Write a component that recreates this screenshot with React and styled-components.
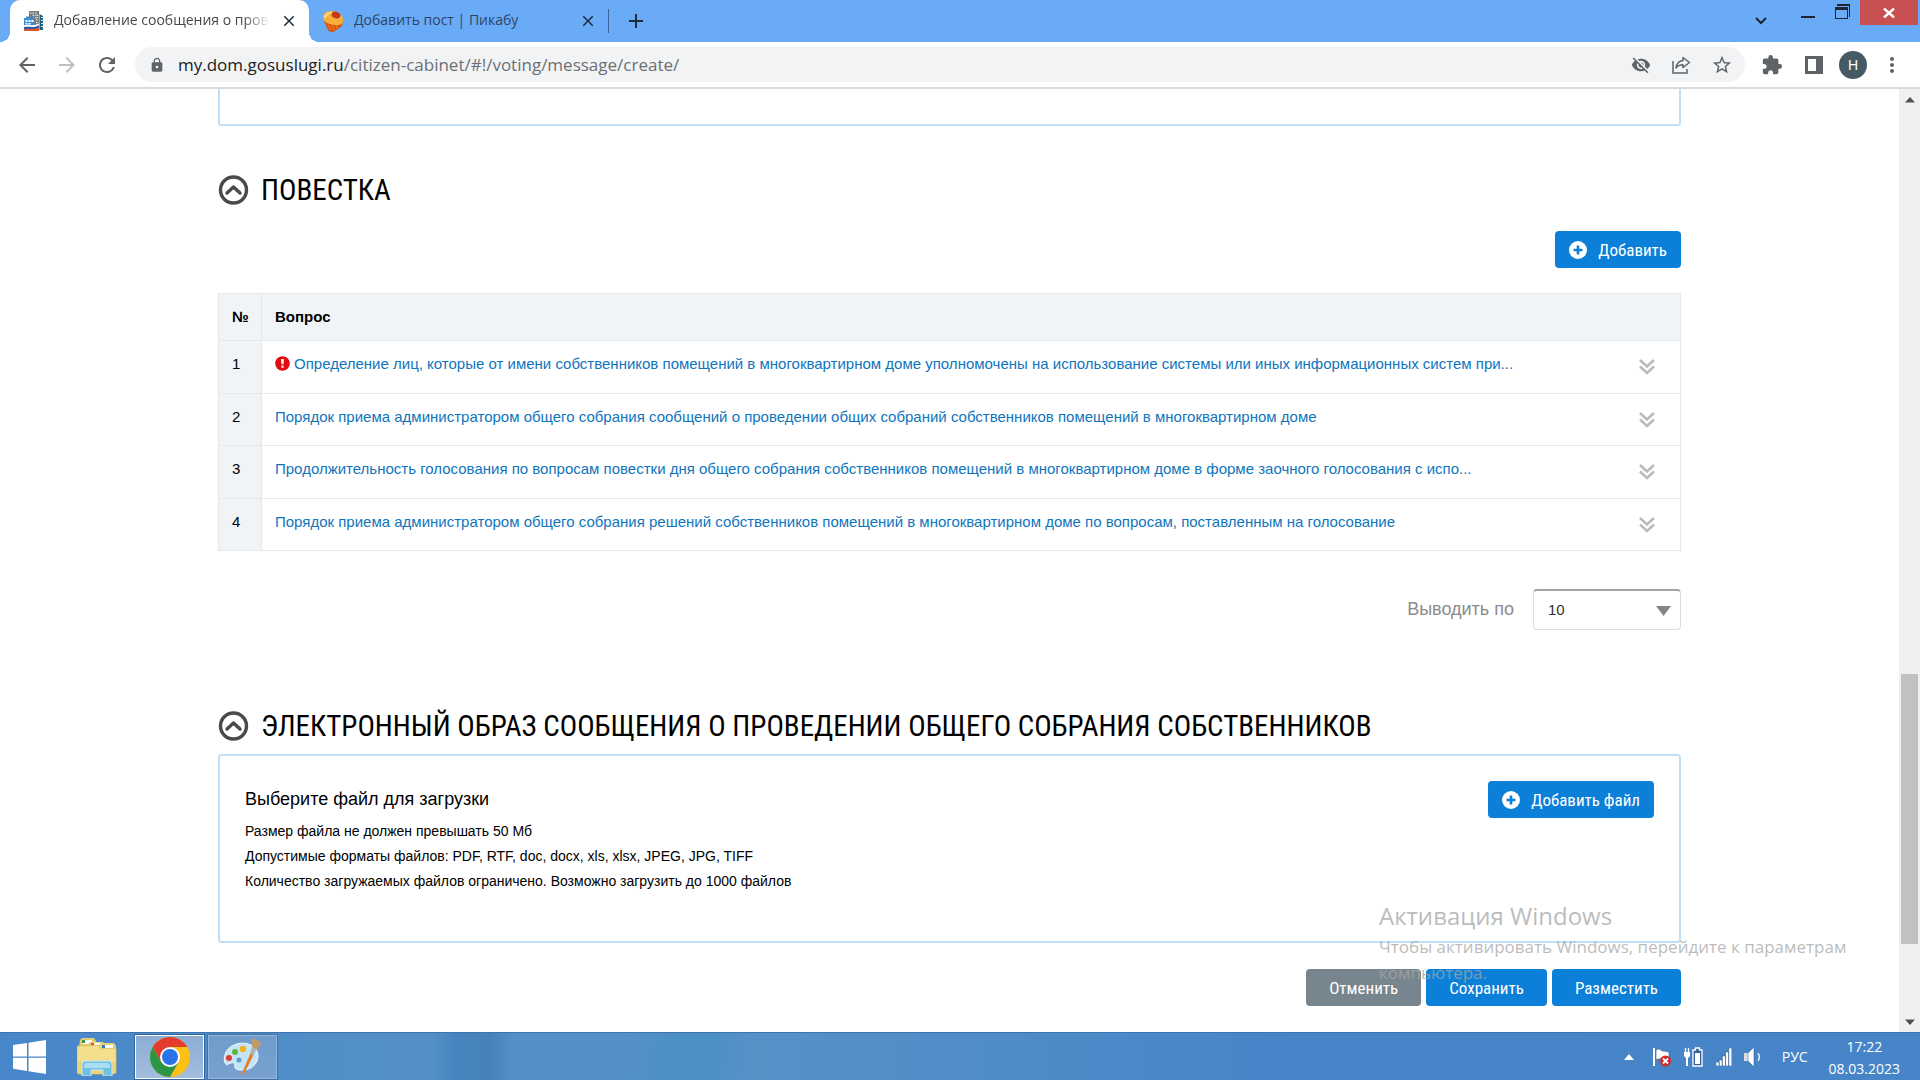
import { useState } from "react";
import styled, { createGlobalStyle, css } from "styled-components";
import {
  MdArrowBack, MdArrowForward, MdRefresh, MdLock, MdVisibilityOff,
  MdStarBorder, MdExtension, MdMoreVert, MdClose, MdAdd,
} from "react-icons/md";

const questions = [
  { id: 1, error: true, text: 'Определение лиц, которые от имени собственников помещений в многоквартирном доме уполномочены на использование системы или иных информационных систем при...' },
  { id: 2, text: 'Порядок приема администратором общего собрания сообщений о проведении общих собраний собственников помещений в многоквартирном доме' },
  { id: 3, text: 'Продолжительность голосования по вопросам повестки дня общего собрания собственников помещений в многоквартирном доме в форме заочного голосования с испо...' },
  { id: 4, text: 'Порядок приема администратором общего собрания решений собственников помещений в многоквартирном доме по вопросам, поставленным на голосование' },
]

const App = () => {
  return (
    <Screen>
      <GlobalStyle />
      <TabStrip />
      <Toolbar />
      <Viewport>
        <Page>
          <PreviousBox />
          <Agenda />
          <FileSection />
          <Actions>
            <Button $grey>Отменить</Button>
            <Button>Сохранить</Button>
            <Button>Разместить</Button>
          </Actions>
        </Page>
        <ScrollBar />
      </Viewport>
      <Taskbar />
      <Watermark>
        <WatermarkTitle>Активация Windows</WatermarkTitle>
        <WatermarkText>Чтобы активировать Windows, перейдите к параметрам компьютера.</WatermarkText>
      </Watermark>
    </Screen>
  )
}

export default App;


// browser

const TabStrip = () => (
  <Tabs>
    <Tab $active>
      <HouseIcon />
      <TabTitle $fade>Добавление сообщения о проведении</TabTitle>
      <IconButton aria-label="Закрыть вкладку" $size={18}><MdClose /></IconButton>
    </Tab>
    <Tab>
      <CakeIcon />
      <TabTitle>Добавить пост | Пикабу</TabTitle>
      <IconButton aria-label="Закрыть вкладку" $size={18}><MdClose /></IconButton>
    </Tab>
    <TabDivider />
    <IconButton aria-label="Новая вкладка" $size={24}><MdAdd /></IconButton>
    <WindowControls>
      <SearchTabs aria-label="Поиск вкладок">
        <svg width="12" height="8" viewBox="0 0 12 8" fill="none" stroke="#20242b" strokeWidth="2"><path d="M1 1l5 5 5-5" /></svg>
      </SearchTabs>
      <WindowButton aria-label="Свернуть">
        <svg width="14" height="16" viewBox="0 0 14 16"><path d="M0 12h14v2H0z" fill="#20242b" /></svg>
      </WindowButton>
      <WindowButton aria-label="Развернуть">
        <svg width="16" height="16" viewBox="0 0 16 16" shapeRendering="crispEdges">
          <path d="M2 0h13v13h-1V2H2z" fill="#20242b" />
          <path d="M0 3h13v12H0zM1 6v8h11V6z" fill="#20242b" fillRule="evenodd" />
        </svg>
      </WindowButton>
      <CloseWindow aria-label="Закрыть">
        <svg width="12" height="10" viewBox="0 0 12 10" stroke="white" strokeWidth="2.4"><path d="M1 0.500l10 9M11 0.500l-10 9" /></svg>
      </CloseWindow>
    </WindowControls>
  </Tabs>
)

const Toolbar = () => (
  <Bar>
    <NavButtons>
      <IconButton aria-label="Назад" $size={24}><MdArrowBack /></IconButton>
      <IconButton aria-label="Вперёд" $size={24} $pale><MdArrowForward /></IconButton>
      <IconButton aria-label="Обновить" $size={24}><MdRefresh /></IconButton>
    </NavButtons>
    <AddressBar>
      <MdLock size={16} />
      <Address href="#">my.dom.gosuslugi.ru<span>/citizen-cabinet/#!/voting/message/create/</span></Address>
      <AddressTools>
        <IconButton aria-label="Файлы cookie" $size={20}><MdVisibilityOff /></IconButton>
        <IconButton aria-label="Поделиться" $size={20}>
          <svg viewBox="0 0 20 20" fill="none" stroke="currentColor" strokeWidth="1.500">
            <path d="M2 6v12h14v-4" />
            <path d="M12 2.500l6.500 5-6.500 5V9.800c-3.500 0-5.500 1-7 3.200.5-4 2.800-7 7-7.500z" strokeLinejoin="round" />
          </svg>
        </IconButton>
        <IconButton aria-label="Добавить в закладки" $size={22}><MdStarBorder /></IconButton>
      </AddressTools>
    </AddressBar>
    <Extensions>
      <IconButton aria-label="Расширения" $size={22}><MdExtension /></IconButton>
      <IconButton aria-label="Боковая панель" $size={18}>
        <svg viewBox="0 0 18 18"><path d="M0 0h18v18H0zM3 3v12h8V3z" fill="currentColor" fillRule="evenodd" /></svg>
      </IconButton>
      <Avatar>Н</Avatar>
      <IconButton aria-label="Меню" $size={24}><MdMoreVert /></IconButton>
    </Extensions>
  </Bar>
)

const ScrollBar = () => (
  <Scroll>
    <ScrollArrow><svg width="10" height="6" viewBox="0 0 10 6"><path d="M0 5.500L5 0l5 5.500z" fill="#505050" /></svg></ScrollArrow>
    <Track>
      <Thumb />
    </Track>
    <ScrollArrow><svg width="10" height="6" viewBox="0 0 10 6"><path d="M0 0.500L5 6l5-5.500z" fill="#505050" /></svg></ScrollArrow>
  </Scroll>
)


// page

const SectionHeading = ({ children }) => (
  <Heading>
    <svg width="31" height="30" viewBox="0 0 31 30" fill="none" stroke="#4a4a4a">
      <circle cx="15.500" cy="15" r="13" strokeWidth="3.400" />
      <path d="M9 18l6.500-6 6.500 6" strokeWidth="3.400" strokeLinecap="round" strokeLinejoin="round" />
    </svg>
    {children}
  </Heading>
)

const PlusIcon = () => (
  <svg width="18" height="18" viewBox="0 0 18 18">
    <circle cx="9" cy="9" r="9" fill="white" />
    <path d="M9 4.500v9M4.500 9h9" stroke="#0c7fd9" strokeWidth="2.600" />
  </svg>
)

const Agenda = () => {
  const [perPage, setPerPage] = useState('10');

  return (
    <section>
      <SectionHeading>ПОВЕСТКА</SectionHeading>
      <AddRow>
        <Button $icon><PlusIcon />Добавить</Button>
      </AddRow>
      <Table>
        <thead>
          <tr>
            <NumberHead>№</NumberHead>
            <Head colSpan={2}>Вопрос</Head>
          </tr>
        </thead>
        <tbody>
          {questions.map((q) => (
            <Row key={q.id}>
              <NumberCell>{q.id}</NumberCell>
              <Cell>
                {q.error && <ErrorIcon />}
                <Question href="#">{q.text}</Question>
              </Cell>
              <ToggleCell>
                <Toggle aria-label="Развернуть">
                  <svg width="16" height="16" viewBox="0 0 16 16" fill="none" stroke="#b9bcbf" strokeWidth="2.600">
                    <path d="M1 1l7 6.500L15 1M1 7.500l7 6.500 7-6.500" />
                  </svg>
                </Toggle>
              </ToggleCell>
            </Row>
          ))}
        </tbody>
      </Table>
      <Pager>
        <label htmlFor="per-page">Выводить по</label>
        <SelectWrap>
          <Select id="per-page" value={perPage} onChange={(e) => setPerPage(e.target.value)}>
            <option>10</option>
            <option>20</option>
            <option>50</option>
          </Select>
          <SelectArrow viewBox="0 0 15 10"><path d="M0 0h15L7.500 10z" fill="#858585" /></SelectArrow>
        </SelectWrap>
      </Pager>
    </section>
  )
}

const FileSection = () => (
  <section>
    <SectionHeading>ЭЛЕКТРОННЫЙ ОБРАЗ СООБЩЕНИЯ О ПРОВЕДЕНИИ ОБЩЕГО СОБРАНИЯ СОБСТВЕННИКОВ</SectionHeading>
    <FileBox>
      <div>
        <FileTitle>Выберите файл для загрузки</FileTitle>
        <FileHint>Размер файла не должен превышать 50 Мб</FileHint>
        <FileHint>Допустимые форматы файлов: PDF, RTF, doc, docx, xls, xlsx, JPEG, JPG, TIFF</FileHint>
        <FileHint>Количество загружаемых файлов ограничено. Возможно загрузить до 1000 файлов</FileHint>
      </div>
      <Button $icon><PlusIcon />Добавить файл</Button>
    </FileBox>
  </section>
)

const ErrorIcon = () => (
  <ErrorSvg width="15" height="15" viewBox="0 0 15 15">
    <circle cx="7.500" cy="7.500" r="7.300" fill="#e30b13" />
    <path d="M6 3h3l-.5 5.200h-2zM6.400 9.500h2.200v2.200H6.400z" fill="white" />
  </ErrorSvg>
)


// taskbar

const Taskbar = () => (
  <TaskPanel>
    <StartButton aria-label="Пуск">
      <svg width="33" height="34" viewBox="0 0 33 34" fill="white">
        <path d="M0 5l14-2v13.500H0zM15.500 2.800L33 0v16.500H15.500zM0 17.800h14V31L0 28.800zM15.500 17.800H33V34l-17.500-2.800z" />
      </svg>
    </StartButton>
    <TaskButton aria-label="Проводник"><FolderIcon /></TaskButton>
    <TaskButton aria-label="Google Chrome" $state="active"><ChromeIcon /></TaskButton>
    <TaskButton aria-label="Paint" $state="open"><PaintIcon /></TaskButton>
    <Tray>
      <svg width="10" height="6" viewBox="0 0 10 6"><path d="M0 6l5-6 5 6z" fill="white" /></svg>
      <FlagIcon />
      <BatteryIcon />
      <SignalIcon />
      <SpeakerIcon />
      <Language>РУС</Language>
      <Clock>
        <span>17:22</span>
        <span>08.03.2023</span>
      </Clock>
    </Tray>
  </TaskPanel>
)

const HouseIcon = () => (
  <svg width="20" height="20" viewBox="0 0 20 20">
    <path d="M5 0h10v15H5z" fill="#77787a" />
    <path d="M6 1.500h1.500v1H6zM8.500 1.500H10v1H8.500zM11 1.500h1.500v1H11zM8.500 3.800H10v1H8.500zM11 3.800h1.500v1H11zM13 3.800h1.200v1H13zM11 6.200h1.500v1H11zM13 6.200h1.200v1H13zM12 8.600h1.500v1H12zM12 11h1.500v1H12z" fill="white" />
    <path d="M15.500 3l3.500 2v14h-3.500z" fill="#1e5f7d" />
    <path d="M17 6h3v1h-3zM17 9h3v1h-3zM17 12h3v1h-3zM17 15h3v1h-3z" fill="#cfe4ef" />
    <path d="M0 7h2V5.500h3V7h2V5h3v10H0z" fill="#3a90d6" />
    <path d="M1.500 9h2v2h-2zM4.500 9h2v2h-2zM7.500 9h2v2h-2zM1.500 12h2v1.500h-2zM4.500 12h2v1.500h-2z" fill="white" />
    <path d="M0 14.500c5-2 8 1.500 15-2v3c-6 2.500-10 0-15 1.500z" fill="white" />
    <path d="M0 16.200c5-1.500 8 1.500 15-2v3c-5 2-8 0-15 1.500z" fill="#2458b0" />
    <path d="M0 18.500c5-1.500 8 .5 15-2V20H0z" fill="#d8562f" />
  </svg>
)

const CakeIcon = () => (
  <svg width="21" height="21" viewBox="0 0 21 21">
    <path d="M1 10l4 9c1 2 5 2.500 7 1l7-5 1-6z" fill="#d9540c" />
    <path d="M5 14l3 5M9 14l2 5.500M13 13l1 4.500" stroke="#f07a1c" strokeWidth="1.300" />
    <path d="M0 6c0-3 3-6 8-6 7 0 11 3 12 8 1 4-3 7-7 6C8 14 0 12 0 6z" fill="#f9ae38" />
    <path d="M2 6c1-2 3-4 6-4" stroke="#ffd98c" strokeWidth="2" fill="none" strokeLinecap="round" />
    <ellipse cx="13" cy="4" rx="4.500" ry="3.200" fill="#c2391a" transform="rotate(20 13 4)" />
  </svg>
)

const FolderIcon = () => (
  <svg width="40" height="38" viewBox="0 0 40 38">
    <path d="M3 2l2-2h12l2 3v6H2z" fill="#e3cd73" />
    <path d="M7 2h8v4H5z" fill="white" /><path d="M5 2h3v3H5z" fill="#2b9b47" />
    <path d="M12 4h14l2 3v5H11z" fill="#ead57e" />
    <path d="M17 5h8v4h-8z" fill="white" /><path d="M14 5h3v3h-3z" fill="#d9442c" />
    <path d="M22 7l2-2h13l2 3v27H22z" fill="#e6cf76" />
    <path d="M28 7h8v4h-8z" fill="white" /><path d="M25 7h3v3h-3z" fill="#2c7ec4" />
    <path d="M0 8l21-1 3 4 15-1v25l-3 1H2l-2-1z" fill="#f3e08f" stroke="#d9bd58" strokeWidth=".8" />
    <path d="M1 24h38v11H1z" fill="#ecd272" />
    <path d="M5 38V26q0-3 3-3h24q3 0 3 3v12h-9v-6H14v6z" fill="#6fc0e2" stroke="#c9ebf7" />
    <path d="M7 28q0-3 3-3h20q3 0 3 3v2H7z" fill="#a9dff2" />
  </svg>
)

const ChromeIcon = () => (
  <svg width="40" height="40" viewBox="0 0 40 40">
    <circle cx="20" cy="20" r="20" fill="#fdc116" />
    <path d="M2.700 10A20 20 0 0 1 37.300 10H20L11.300 25z" fill="#e33b2e" />
    <path d="M2.700 10A20 20 0 0 0 20 40l8.700-15L20 30l-8.700-5z" fill="#2c9548" />
    <circle cx="20" cy="20" r="10" fill="white" />
    <circle cx="20" cy="20" r="8" fill="#2a73e8" />
  </svg>
)

const PaintIcon = () => (
  <svg width="40" height="38" viewBox="0 0 40 38">
    <path d="M14 6C24 3 35 8 35 18c0 9-9 15-17 14-5 0-7-2-6-5 0-3-4-3-8 0C-1 25 0 9 14 6z" fill="#c5e4f5" stroke="#eef8fd" />
    <circle cx="16" cy="22" r="2.500" fill="#5f9cc9" />
    <circle cx="6" cy="20" r="3" fill="#dd3b32" />
    <circle cx="12" cy="14" r="3" fill="#5cb83a" />
    <circle cx="20" cy="11" r="3.200" fill="#f4b21f" />
    <path d="M28 14l3 2-10 20-2 1 0-2z" fill="#e0802b" />
    <path d="M29 9l4 3-3 6-3-3z" fill="#a8b3ba" />
    <path d="M29 9c0-4-1-7 1-9l3 2 5 2c0 4-2 6-5 8z" fill="#c29a6b" />
  </svg>
)

const FlagIcon = () => (
  <svg width="20" height="20" viewBox="0 0 20 20">
    <path d="M1 1h2v18H1z" fill="white" />
    <path d="M4 3c4-3 5 2 8 1l5 1v8c-4 1-6-3-13 0z" fill="white" stroke="#2d5a90" strokeWidth=".6" />
    <circle cx="13.500" cy="14" r="5.500" fill="#d02a2a" />
    <path d="M11 11.500l5 5M16 11.500l-5 5" stroke="white" strokeWidth="1.800" />
  </svg>
)

const BatteryIcon = () => (
  <svg width="20" height="20" viewBox="0 0 20 20">
    <path d="M1.500 1v4M4.500 1v4" stroke="white" strokeWidth="1.300" />
    <path d="M0 5h6v4L4 11v8H2v-8L0 9z" fill="white" />
    <path d="M9 3h2.500V1h4v2H18v16H9z" fill="#35608f" stroke="white" strokeWidth="1.300" />
    <path d="M11 6h5v11h-5z" fill="white" />
  </svg>
)

const SignalIcon = () => (
  <svg width="16" height="18" viewBox="0 0 16 18" fill="white" stroke="#2b5688" strokeWidth=".5">
    <path d="M0 14h3v4H0zM3.200 12h3v6h-3zM6.400 8h3v10h-3zM9.600 4h3v14h-3zM12.800 0h3v18h-3z" />
  </svg>
)

const SpeakerIcon = () => (
  <svg width="18" height="20" viewBox="0 0 18 20">
    <path d="M0 6h4v8H0z" fill="#d7dde3" />
    <path d="M4 6l6-6v20l-6-6z" fill="white" stroke="#2b5688" strokeWidth=".5" />
    <path d="M14 6c2 3 2 5 0 8" stroke="white" strokeWidth="1.300" fill="none" />
  </svg>
)


const uiFont = `"Open Sans", "Noto Sans", sans-serif`
const bodyFont = `"Liberation Sans", Arial, sans-serif`
const condensed = `"Roboto Condensed", Roboto, sans-serif`

const GlobalStyle = createGlobalStyle`
  * {
    box-sizing: border-box;
  }

  body {
    margin: 0;
    background: white;
    font-family: ${bodyFont};
    color: black;
  }

  svg {
    display: block;
    flex-shrink: 0;
  }

  button {
    border: none;
    background: none;
    padding: 0;
    cursor: pointer;
  }
`

const Screen = styled.div`
  position: relative;
  min-height: 100vh;
  display: flex;
  flex-direction: column;
  overflow: hidden;
`

const Tabs = styled.div`
  height: 42px;
  padding-left: 10px;
  display: flex;
  align-items: center;
  background: #6aabf7;
  font-family: ${uiFont};
`

const Tab = styled.div`
  width: 299px;
  height: 100%;
  padding: 0 11px 0 14px;
  display: flex;
  align-items: center;
  gap: 10px;
  color: #2d4466;

  ${(p) => p.$active && css`
    position: relative;
    color: #45494d;
    background: white;
    border-radius: 10px 10px 0 0;

    &::before, &::after {
      content: "";
      position: absolute;
      bottom: 0;
      width: 10px;
      height: 10px;
    }

    &::before {
      left: -10px;
      background: radial-gradient(circle at 0 0, transparent 10px, white 10px);
    }

    &::after {
      right: -10px;
      background: radial-gradient(circle at 100% 0, transparent 10px, white 10px);
    }
  `}
`

const TabTitle = styled.span`
  flex: 1;
  overflow: hidden;
  white-space: nowrap;
  font-size: 14px;
  line-height: 20px;
  padding-bottom: 2px;
  ${(p) => p.$fade && css`
    mask-image: linear-gradient(to right, black 88%, transparent);
  `}
`

const TabDivider = styled.div`
  width: 1px;
  height: 24px;
  margin-right: 15px;
  background: #3c6596;
`

const IconButton = styled.button`
  display: flex;
  color: ${(p) => (p.$pale ? '#bdbfc2' : '#5f6368')};

  svg {
    width: ${(p) => p.$size}px;
    height: ${(p) => p.$size}px;
  }

  ${Tabs} & {
    color: #202b3b;
  }
`

const WindowControls = styled.div`
  height: 100%;
  margin-left: auto;
  padding-right: 2px;
  display: flex;
  align-items: flex-start;
`

const SearchTabs = styled.button`
  height: 42px;
  margin-right: 34px;
  display: flex;
  align-items: center;
`

const WindowButton = styled.button`
  margin: 4px 20px 0 0;

  & + & {
    margin-right: 9px;
  }
`

const CloseWindow = styled.button`
  width: 58px;
  height: 25px;
  display: flex;
  align-items: center;
  justify-content: center;
  background: #c75050;
`

const Bar = styled.div`
  height: 47px;
  padding: 0 16px 0 15px;
  display: flex;
  align-items: center;
  border-bottom: 2px solid #dadada;
  font-family: ${uiFont};
`

const NavButtons = styled.div`
  display: flex;
  gap: 16px;
  margin-right: 16px;
`

const AddressBar = styled.div`
  flex: 1;
  height: 35px;
  padding: 0 12px 0 14px;
  display: flex;
  align-items: center;
  border-radius: 18px;
  background: #f1f3f4;
  color: #5f6368;
`

const Address = styled.a`
  margin-left: 13px;
  font-size: 17px;
  line-height: 24px;
  color: #202124;
  text-decoration: none;

  span {
    color: #6c7074;
  }
`

const AddressTools = styled.div`
  margin-left: auto;
  display: flex;
  align-items: center;
  gap: 20px;
`

const Extensions = styled.div`
  margin-left: 16px;
  display: flex;
  align-items: center;
  gap: 22px;

  & > :last-child {
    margin-left: -9px;
  }
`

const Avatar = styled.span`
  width: 28px;
  height: 28px;
  margin-left: -6px;
  border-radius: 50%;
  background: #455a64;
  color: white;
  font: 14px/28px ${bodyFont};
  text-align: center;
`

const Viewport = styled.div`
  flex: 1;
  display: flex;
`

const Page = styled.main`
  flex: 1;
  padding: 0 218px 26px;
`

const PreviousBox = styled.div`
  height: 37px;
  margin-bottom: 46px;
  border: 2px solid #bfdff6;
  border-top: none;
  border-radius: 0 0 3px 3px;
`

const Heading = styled.h2`
  margin: 0;
  display: flex;
  align-items: center;
  gap: 12px;
  font: 400 29px/36px ${condensed};
`

const AddRow = styled.div`
  margin: 23px 0 25px;
  display: flex;
  justify-content: flex-end;
`

const Button = styled.button`
  height: 37px;
  padding: 0 ${(p) => (p.$icon ? 14 : 23)}px;
  display: flex;
  align-items: center;
  gap: 11px;
  border-radius: 4px;
  background: ${(p) => (p.$grey ? '#77858f' : '#0c7fd9')};
  color: white;
  font: 17px/24px ${condensed};
`

const Table = styled.table`
  width: 100%;
  border-collapse: collapse;
  border: 1px solid #e3e8ec;
  font-size: 15px;
  line-height: 20px;
`

const Head = styled.th`
  height: 47px;
  padding: 0 13px;
  border: 1px solid #e3e8ec;
  background: #f0f4f7;
  text-align: left;
`

const NumberHead = styled(Head)`
  width: 43px;
  padding-right: 0;
`

const Row = styled.tr`
  height: 52px;
  border-bottom: 1px solid #e3e8ec;

  &:nth-child(odd) {
    height: 53px;
  }
`

const Cell = styled.td`
  padding: 13px 13px 0;
  vertical-align: top;
`

const NumberCell = styled(Cell)`
  border-right: 1px solid #e3e8ec;
  background: #f0f4f7;
`

const ToggleCell = styled.td`
  width: 66px;
  padding: 0 25px;
`

const Toggle = styled.button`
  display: block;
`

const ErrorSvg = styled.svg`
  display: inline-block;
  margin-right: 4px;
  vertical-align: -2px;
`

const Question = styled.a`
  color: #0f75bd;
  text-decoration: none;
`

const Pager = styled.div`
  margin: 38px 0 78px;
  display: flex;
  align-items: center;
  justify-content: flex-end;
  gap: 19px;
  color: #8c8c8c;
  font-size: 18px;
`

const SelectWrap = styled.div`
  position: relative;
  width: 148px;
`

const Select = styled.select`
  width: 100%;
  height: 41px;
  padding: 0 14px 2px;
  appearance: none;
  border: 1px solid #dcdcdc;
  border-top: 2px solid #a3a3a3;
  border-radius: 4px;
  background: white;
  color: #333;
  font: 15px ${bodyFont};
`

const SelectArrow = styled.svg`
  position: absolute;
  top: 17px;
  right: 10px;
  width: 15px;
  height: 10px;
  pointer-events: none;
`

const FileBox = styled.div`
  min-height: 189px;
  margin-top: 10px;
  padding: 25px;
  display: flex;
  align-items: flex-start;
  justify-content: space-between;
  border: 2px solid #bfdff6;
  border-radius: 4px;
`

const FileTitle = styled.h3`
  margin: 6px 0 8px;
  font-size: 18px;
  font-weight: 400;
  line-height: 24px;
`

const FileHint = styled.p`
  margin: 0;
  font-size: 14px;
  line-height: 25px;
`

const Actions = styled.div`
  margin-top: 26px;
  display: flex;
  justify-content: flex-end;
  gap: 5px;
`

const Scroll = styled.div`
  width: 21px;
  display: flex;
  flex-direction: column;
  background: #f0f0f0;
`

const ScrollArrow = styled.div`
  height: 21px;
  display: flex;
  align-items: center;
  justify-content: center;
`

const Track = styled.div`
  flex: 1;
  padding: 0 2px;
  display: grid;
  grid-template-rows: 564fr 270fr 67fr;
`

const Thumb = styled.div`
  grid-row: 2;
  background: #c1c1c1;
`

const TaskPanel = styled.footer`
  height: 48px;
  display: flex;
  align-items: center;
  border-top: 1px solid #3f73b0;
  background:
    linear-gradient(100deg, transparent 620px, #3f8fc077 665px, #3f8fc077 705px, transparent 740px),
    linear-gradient(90deg, transparent 432px, #3f7dbbaa 455px, #437fb6cc 490px, transparent 512px),
    linear-gradient(90deg, #4786c9 0, #5390c8 20%, #5691c8 40%, #4686c8 66%, #4784c8 100%);
`

const StartButton = styled.button`
  margin: 0 15px 0 13px;
`

const TaskButton = styled.button`
  width: 71px;
  height: 46px;
  margin-right: 2px;
  display: flex;
  align-items: center;
  justify-content: center;

  ${(p) => p.$state === 'active' && css`
    border: 1px solid #34659c;
    background: linear-gradient(#8badd6, #a3bddd);
    box-shadow: inset 0 0 0 1px white;
  `}

  ${(p) => p.$state === 'open' && css`
    border: 1px solid #44719f;
    background: linear-gradient(#6e9ccc, #78a1cf);
    box-shadow: inset 0 0 0 1px #93b6dc;
  `}
`

const Tray = styled.div`
  margin-left: auto;
  padding-right: 20px;
  display: flex;
  align-items: center;
  gap: 12px;
  color: white;
  font-family: ${uiFont};

  & > :first-child {
    margin-right: 6px;
  }
`

const Language = styled.span`
  margin-left: 8px;
  font-size: 14px;
`

const Clock = styled.time`
  margin-left: 9px;
  padding-top: 2px;
  display: flex;
  flex-direction: column;
  align-items: center;
  font-size: 14px;
  line-height: 22px;
`

const Watermark = styled.div`
  position: absolute;
  right: 60px;
  bottom: 94px;
  width: 481px;
  color: rgba(165, 165, 165, 0.75);
  font-family: ${uiFont};
  pointer-events: none;
`

const WatermarkTitle = styled.p`
  margin: 0 0 2px;
  font-size: 24px;
  line-height: 32px;
`

const WatermarkText = styled.p`
  margin: 0;
  font-size: 17px;
  line-height: 26px;
`
